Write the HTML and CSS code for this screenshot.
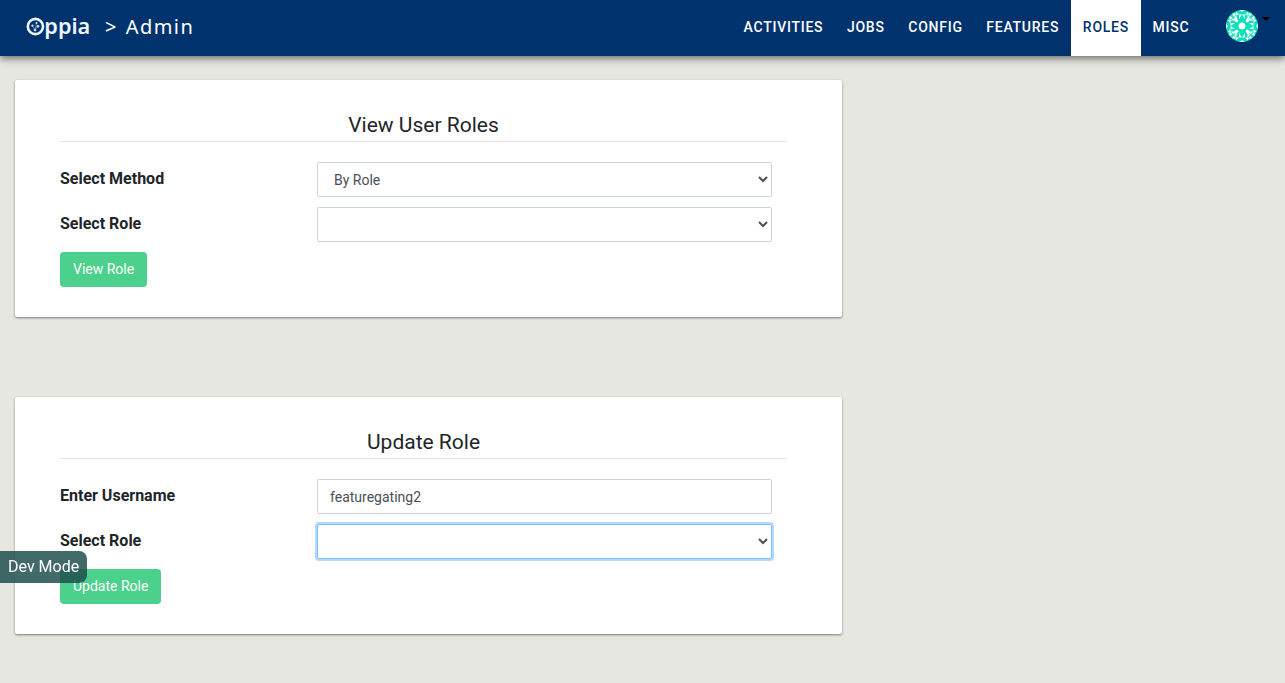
FILE: index.html
```html
<!DOCTYPE html>
<html lang="en">
<head>
<meta charset="utf-8">
<title>Oppia Admin</title>
<link rel="stylesheet" href="styles.css">
</head>
<body>
<header class="navbar">
  <div class="brand">
    <svg class="logo" width="74" height="36" viewBox="0 0 74 36" role="img" aria-label="Oppia">
      <circle cx="9.400" cy="16.500" r="7.600" fill="none" stroke="#eef6fa" stroke-width="2.600"/>
      <g fill="#dcebf5">
        <circle cx="10.500" cy="13" r="1"/><circle cx="6.400" cy="15.700" r="1.100"/>
        <circle cx="12" cy="16.200" r="1.300"/><circle cx="9" cy="20" r="1.300"/>
      </g>
      <path d="M10.500 13 9 20M6.400 15.700l2.600 4.300 3-3.800" fill="none" stroke="#b7cfe2" stroke-width=".5"/>
      <text class="logo-text" x="18.300" y="24" textLength="46" lengthAdjust="spacingAndGlyphs">ppia</text>
    </svg>
    <span class="crumb"><span class="sep">&gt;</span><span class="section">Admin</span></span>
  </div>
  <nav class="tabs">
    <a class="tab">ACTIVITIES</a>
    <a class="tab">JOBS</a>
    <a class="tab">CONFIG</a>
    <a class="tab">FEATURES</a>
    <a class="tab active">ROLES</a>
    <a class="tab">MISC</a>
  </nav>
  <div class="profile">
    <svg width="32" height="32" viewBox="0 0 32 32">
      <defs>
        <clipPath id="round"><circle cx="16" cy="16" r="16"/></clipPath>
        <g id="quarter">
          <path fill="#fff" d="M16 16V12.500L14 13 13 14 12.500 16zM10.500 7.500l2 3.500-1.500 1.500-3.500-2zM13 4.500h3l-3 4.500zM4.500 13v3l4.500-3zM10.500 4.500v4L7 8.500zM4.500 10.500h4L8.500 7zM10 1.500l3 3h-3zM1.500 10l3 3v-3zM6 3.500h4.500l-3 3zM3.500 6v4.500l3-3zM13 0h3v1.800zM0 13v3h1.800z"/>
        </g>
      </defs>
      <g clip-path="url(#round)">
        <path fill="#0be0bc" d="M0 0h32v32H0z"/>
        <use href="#quarter"/>
        <use href="#quarter" transform="matrix(-1 0 0 1 32 0)"/>
        <use href="#quarter" transform="matrix(1 0 0 -1 0 32)"/>
        <use href="#quarter" transform="matrix(-1 0 0 -1 32 32)"/>
      </g>
    </svg>
    <span class="caret"></span>
  </div>
</header>
<main class="content">
  <section class="card">
    <h3 class="title">View User Roles</h3>
    <div class="row">
      <span class="label">Select Method</span>
      <div class="field select"><span>By Role</span>
        <svg class="chevron" width="10" height="7" viewBox="0 0 10 7"><path d="M1 1l4 4 4-4"/></svg></div>
    </div>
    <div class="row">
      <span class="label">Select Role</span>
      <div class="field select"><span></span>
        <svg class="chevron" width="10" height="7" viewBox="0 0 10 7"><path d="M1 1l4 4 4-4"/></svg></div>
    </div>
    <button class="button">View Role</button>
  </section>
  <section class="card">
    <h3 class="title">Update Role</h3>
    <div class="row">
      <span class="label">Enter Username</span>
      <div class="field">featuregating2</div>
    </div>
    <div class="row">
      <span class="label">Select Role</span>
      <div class="field select focused"><span></span>
        <svg class="chevron" width="10" height="7" viewBox="0 0 10 7"><path d="M1 1l4 4 4-4"/></svg></div>
    </div>
    <button class="button">Update Role</button>
  </section>
</main>
<div class="dev-mode">Dev Mode</div>
</body>
</html>
```
FILE: styles.css
```css
* { box-sizing: border-box; }
body {
  margin: 0;
  height: 683px;
  overflow: hidden;
  background: #e6e7e1;
  color: #212529;
  font-family: Roboto, "Liberation Sans", sans-serif;
  font-size: 16px;
}
.navbar {
  position: relative;
  display: flex;
  height: 56px;
  background: #00326e;
  box-shadow: 0 2px 8px rgba(0, 0, 0, .6);
}
.brand {
  display: flex;
  align-items: center;
  padding-left: 26px;
  padding-bottom: 4px;
  color: #fff;
}
.logo { margin-top: 4px; }
.logo-text {
  font: 600 22px "Noto Sans", sans-serif;
  fill: #eef6fa;
}
.crumb {
  display: flex;
  gap: 8px;
  padding-left: 5px;
  font: 20px "Noto Sans", sans-serif;
  letter-spacing: 1.400px;
}
.tabs { display: flex; margin-left: auto; }
.tab {
  display: flex;
  align-items: center;
  padding: 0 11.600px 2px 12px;
  color: #fff;
  font-size: 14px;
  font-weight: 500;
  letter-spacing: .75px;
}
.tab.active { background: #fff; color: #00326e; }
.profile {
  display: flex;
  width: 84px;
  padding: 10px 0 0 25px;
}
.caret {
  width: 8px;
  height: 4px;
  margin: 7px 0 0 4px;
  background: #000;
  clip-path: polygon(0 0, 100% 0, 50% 100%);
}
.content {
  display: flex;
  flex-direction: column;
  gap: 80px;
  width: 842px;
  padding: 24px 0 0 15px;
}
.card {
  height: 237px;
  padding: 30px 55px 30px 45px;
  border-radius: 2px;
  background: #fff;
  box-shadow: 0 1px 3px rgba(0, 0, 0, .2), 0 1px 2px rgba(0, 0, 0, .3);
}
.title {
  height: 32px;
  margin: 0 0 20px;
  border-bottom: 1px solid #e0e1e2;
  font-size: 21px;
  font-weight: 400;
  line-height: 30px;
  text-align: center;
}
.row {
  display: grid;
  grid-template-columns: 257px 455px;
  height: 35px;
  margin-bottom: 10px;
}
.label { font-weight: 700; line-height: 33px; }
.field {
  display: flex;
  align-items: center;
  height: 35px;
  padding: 1px 12px 0;
  border: 1px solid #ced4da;
  border-radius: 2px;
  color: #495057;
  font-size: 14px;
}
.select { justify-content: space-between; padding: 1px 3px 0 16px; }
.focused { border-color: #80bdff; box-shadow: 0 0 0 2px #b5d8ff; }
.chevron { margin-top: -2px; }
.chevron path { fill: none; stroke: #495057; stroke-width: 2; }
.button {
  display: block;
  height: 35px;
  padding: 0 13px 2px;
  border: 0;
  border-radius: 4px;
  background: #4bd18b;
  color: #fff;
  font: 14px Roboto, sans-serif;
}
.dev-mode {
  position: fixed;
  top: 551px;
  left: 0;
  width: 87px;
  height: 32px;
  padding-left: 8px;
  border-radius: 0 8px 8px 0;
  background: rgba(30, 77, 76, .84);
  color: #fff;
  line-height: 31px;
}
```
